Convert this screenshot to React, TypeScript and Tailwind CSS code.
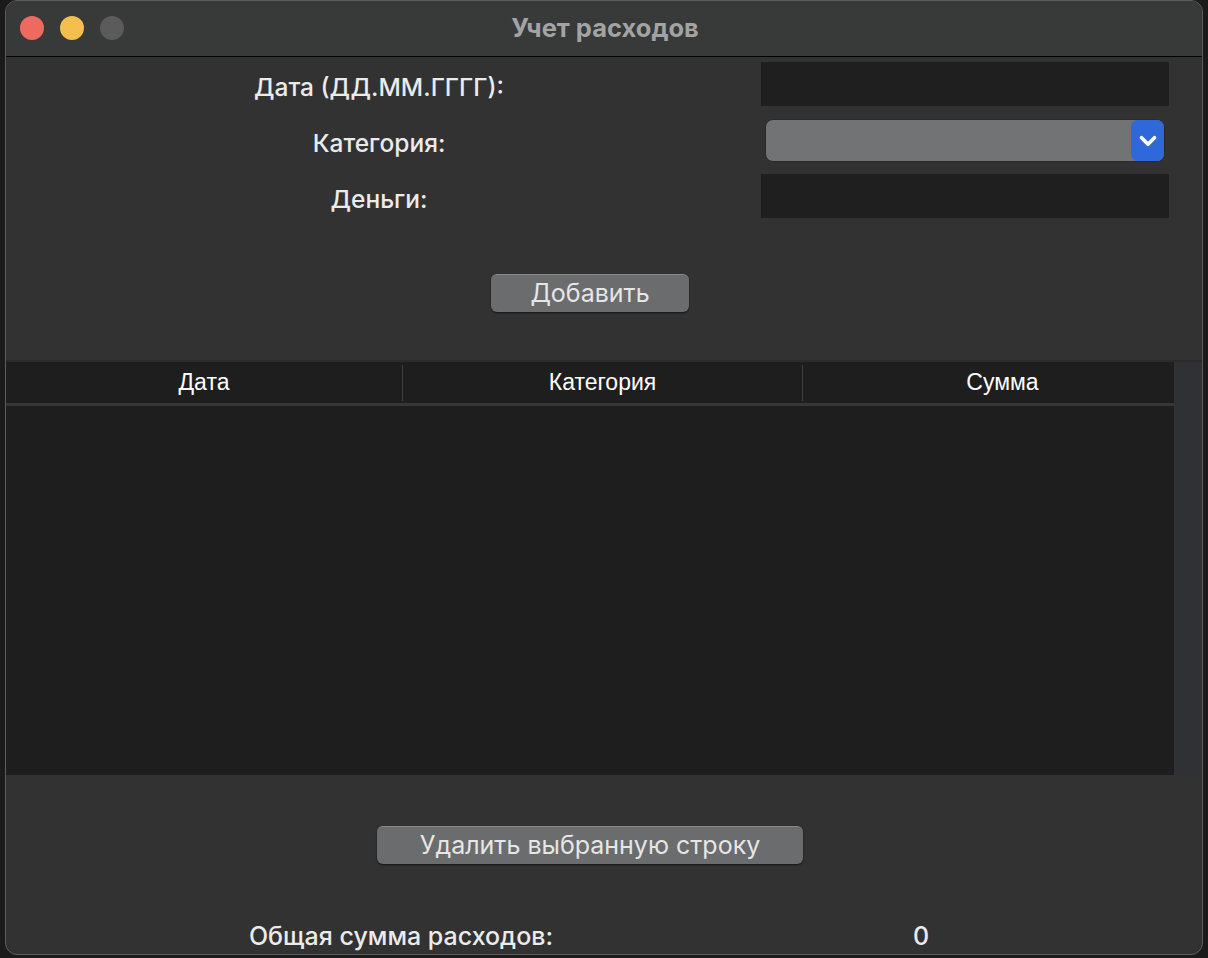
import { ChevronDown } from 'lucide-react';

const font = { fontFamily: 'Inter, "Noto Sans", "Liberation Sans", sans-serif' };

const columns = [
  { name: 'Дата', w: 'w-[396px]' },
  { name: 'Категория', w: 'w-[400px]' },
  { name: 'Сумма', w: 'w-[400px]' },
];

function FormRow({ label, children }: { label: string; children: React.ReactNode }) {
  return (
    <div className="flex items-center">
      <div className="w-[746px] text-center text-[24.5px] font-medium text-[#ebebeb] pt-[6px]">{label}</div>
      <div className="ml-[9px] w-[408px] flex">{children}</div>
    </div>
  );
}

function MacButton({ label, width }: { label: string; width: string }) {
  return (
    <button
      className={`${width} h-[38px] rounded-[6px] bg-[#6b6c6d] border-t border-[#8a8a8a] shadow-[0_1px_2px_rgba(0,0,0,0.6)] text-[25px] text-[#e6e6e6] leading-none`}
    >
      {label}
    </button>
  );
}

export default function App() {
  return (
    <div className="w-[1208px] h-[958px] bg-[#1b1b1b] overflow-hidden" style={font}>
      <div className="ml-[5px] w-[1198px] h-[955px] rounded-[12px] border border-[#5c5c5c] bg-[#323232] overflow-hidden flex flex-col">
        {/* Title bar */}
        <div className="relative h-[56px] shrink-0 bg-[#383939] border-b border-black flex items-center justify-center">
          <div className="absolute left-[14px] top-[15px] flex gap-[16px]">
            <span className="w-[24px] h-[24px] rounded-full bg-[#ee6a5f]" />
            <span className="w-[24px] h-[24px] rounded-full bg-[#f5bf4f]" />
            <span className="w-[24px] h-[24px] rounded-full bg-[#5b5b5b]" />
          </div>
          <span className="text-[25.5px] font-bold text-[#a3a3a3] pl-[2px]">Учет расходов</span>
        </div>

        {/* Form */}
        <div className="flex flex-col pt-[5px]">
          <FormRow label="Дата (ДД.ММ.ГГГГ):">
            <div className="w-full h-[44px] bg-[#1f1f1f]" />
          </FormRow>
          <div className="mt-[13px]">
            <FormRow label="Категория:">
              <div className="mx-[4px] w-full h-[43px] rounded-[8px] bg-[#727374] border border-[#2a2a2a] flex justify-end">
                <div className="w-[33px] h-full rounded-[7px] bg-[#2f68d8] flex items-center justify-center">
                  <ChevronDown className="w-[26px] h-[26px] text-white" strokeWidth={3.4} />
                </div>
              </div>
            </FormRow>
          </div>
          <div className="mt-[12px]">
            <FormRow label="Деньги:">
              <div className="w-full h-[44px] bg-[#1f1f1f]" />
            </FormRow>
          </div>
        </div>

        <div className="flex w-[1168px] justify-center mt-[56px]">
          <MacButton label="Добавить" width="w-[198px]" />
        </div>

        {/* Table */}
        <div className="mt-[48px] flex h-[415px] border-t-2 border-[#2a2a2a]">
          <div className="w-[1168px] bg-[#1e1e1e] overflow-hidden flex flex-col">
            <div className="w-[1200px] h-[44px] flex items-center border-b-[3px] border-[#363636]" style={{ fontFamily: '"Liberation Sans", Arial, sans-serif' }}>
              {columns.map((c, i) => (
                <div
                  key={c.name}
                  className={`${c.w} shrink-0 h-[36px] flex items-center justify-center text-[23px] text-white ${i > 0 ? 'border-l border-[#424242]' : ''}`}
                >
                  {c.name}
                </div>
              ))}
            </div>
          </div>
          <div className="flex-1 bg-[#303134]" />
        </div>

        <div className="flex w-[1168px] justify-center mt-[51px]">
          <MacButton label="Удалить выбранную строку" width="w-[426px]" />
        </div>

        <div className="flex items-center h-[30px] mt-[58px] text-[25px] text-[#ebebeb] font-medium">
          <div className="w-[790px] text-center">Общая сумма расходов:</div>
          <div className="w-[250px] text-center">0</div>
        </div>
      </div>
    </div>
  );
}
